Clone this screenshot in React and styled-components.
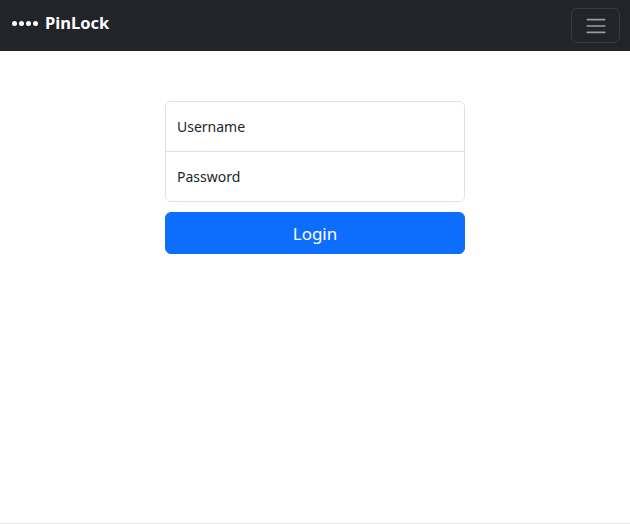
import React from "react";
import styled, { createGlobalStyle } from "styled-components";

const Global = createGlobalStyle`
  html, body { margin: 0; padding: 0; }
  body {
    font-family: "Noto Sans", "Open Sans", sans-serif;
    color: #212529;
    background: #fff;
  }
  * { box-sizing: border-box; }
`;

const Page = styled.div`
  min-height: 524px;
  display: flex;
  flex-direction: column;
`;

const Navbar = styled.nav`
  height: 51px;
  background: #212529;
  display: flex;
  align-items: center;
  justify-content: space-between;
  padding: 0 10px 0 12px;
`;

const Brand = styled.a`
  color: #fff;
  font-weight: 700;
  font-size: 16.5px;
  display: flex;
  align-items: center;
  gap: 7px;
  margin-bottom: 6px;
  text-decoration: none;
`;

const Dots = styled.span`
  display: flex;
  gap: 2px;
  margin-top: 2px;
`;

const Dot = styled.span`
  width: 5px;
  height: 5px;
  border-radius: 50%;
  background: #fff;
`;

const Toggler = styled.button`
  width: 49px;
  height: 35px;
  border: 1px solid rgba(255, 255, 255, 0.1);
  border-radius: 6px;
  background: transparent;
  display: flex;
  align-items: center;
  justify-content: center;
  padding: 0;
`;

const Main = styled.main`
  flex: 1;
  display: flex;
  justify-content: center;
  padding-top: 50px;
`;

const Form = styled.form`
  width: 300px;
  display: flex;
  flex-direction: column;
`;

const InputGroup = styled.div`
  border: 1px solid #dee2e6;
  border-radius: 6px;
  overflow: hidden;
`;

const Input = styled.input`
  display: block;
  width: 100%;
  height: ${(p) => (p.$first ? "49px" : "50px")};
  border: none;
  border-top: ${(p) => (p.$first ? "none" : "1px solid #dee2e6")};
  padding: 0 11px;
  font-family: inherit;
  font-size: 14px;
  color: #212529;
  outline: none;
  &::placeholder { color: #212529; opacity: 1; }
`;

const Button = styled.button`
  margin-top: 10px;
  height: 42px;
  background: #0d6efd;
  border: 1px solid #0d6efd;
  border-radius: 6px;
  color: #fff;
  font-family: inherit;
  font-size: 17px;
  cursor: pointer;
`;

const Footer = styled.footer`
  height: 1px;
  background: #e5e5e5;
`;

export default function App() {
  return (
    <Page>
      <Global />
      <Navbar>
        <Brand href="#">
          <Dots>
            <Dot /><Dot /><Dot /><Dot />
          </Dots>
          PinLock
        </Brand>
        <Toggler aria-label="Toggle navigation">
          <svg width="24" height="24" viewBox="0 0 30 30">
            <path
              d="M4 7h22M4 15h22M4 23h22"
              stroke="rgba(255,255,255,0.55)"
              strokeWidth="2"
              strokeLinecap="round"
            />
          </svg>
        </Toggler>
      </Navbar>
      <Main>
        <Form onSubmit={(e) => e.preventDefault()}>
          <InputGroup>
            <Input $first placeholder="Username" />
            <Input type="password" placeholder="Password" />
          </InputGroup>
          <Button type="submit">Login</Button>
        </Form>
      </Main>
      <Footer />
    </Page>
  );
}
